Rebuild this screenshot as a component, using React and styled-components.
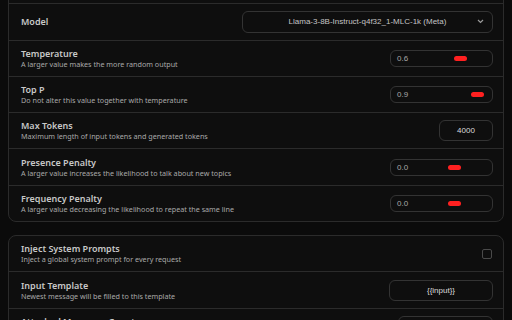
import styled, { createGlobalStyle } from 'styled-components'

const GlobalStyle = createGlobalStyle`
    html, body {
        margin: 0;
        background: #0b0b0b;
        overflow: hidden;
    }
    body {
        font-family: "Noto Sans", "Open Sans", sans-serif;
    }
`

const Page = styled.div`
    display: flex;
    flex-direction: column;
    gap: 13px;
    padding: 0 8px;
    margin-top: -33px;
`

const List = styled.div`
    border: 1px solid #2b2b2b;
    border-radius: 8px;
    background: #0e0e0e;
    overflow: hidden;
`

const Row = styled.div`
    display: flex;
    justify-content: space-between;
    align-items: center;
    height: 35.3px;
    padding: 0 10px 0 12px;
    border-bottom: 1px solid #2b2b2b;

    &:last-child {
        border-bottom: none;
    }
`

const Label = styled.div`
    display: flex;
    flex-direction: column;
`

const Title = styled.div`
    font-size: 9px;
    font-weight: 600;
    line-height: 11px;
    color: #c8c8c8;
`

const Sub = styled.div`
    font-size: 7.2px;
    line-height: 10px;
    color: #a9a9a9;
`

const Select = styled.div`
    position: relative;
    width: 249px;
    height: 20px;
    border: 1px solid #333;
    border-radius: 6px;
    display: flex;
    align-items: center;
    justify-content: center;
    font-family: "Liberation Sans", Arial, sans-serif;
    font-size: 8px;
    color: #c4c4c4;
`

const Chevron = styled.svg`
    position: absolute;
    right: 8px;
    top: 7px;
`

const SliderBox = styled.div`
    position: relative;
    width: 95px;
    height: 15px;
    padding-left: 6px;
    border: 1px solid #333;
    border-radius: 6px;
    display: flex;
    align-items: center;
    font-family: "Liberation Sans", Arial, sans-serif;
    font-size: 8px;
    color: #a8a8a8;
`

const Track = styled.div`
    position: absolute;
    left: 34px;
    right: 9px;
    top: 5px;
    height: 5px;
`

const Thumb = styled.div`
    position: absolute;
    top: 0;
    width: 13px;
    height: 5px;
    margin-left: -6px;
    border-radius: 3px;
    background: #ff2020;
`

const Field = styled.div`
    width: ${p => p.$w}px;
    height: ${p => p.$h}px;
    border: 1px solid #333;
    border-radius: 6px;
    display: flex;
    align-items: center;
    justify-content: center;
    font-family: "Liberation Sans", Arial, sans-serif;
    font-size: 8px;
    color: #dcdcdc;
`

const Check = styled.div`
    width: 8px;
    height: 8px;
    border: 1px solid #4a4a4a;
    border-radius: 2px;
    margin-right: 1px;
`

function Slider({ value, min, max }) {
    const pct = ((value - min) / (max - min)) * 100
    return (
        <SliderBox>
            {value.toFixed(1)}
            <Track>
                <Thumb style={{ left: `${pct}%` }} />
            </Track>
        </SliderBox>
    )
}

function Item({ title, sub, children }) {
    return (
        <Row>
            <Label>
                <Title>{title}</Title>
                {sub && <Sub>{sub}</Sub>}
            </Label>
            {children}
        </Row>
    )
}

function App() {
    return (
        <>
            <GlobalStyle />
            <Page>
                <List>
                    <Item title="" />
                    <Item title="Model">
                        <Select>
                            Llama-3-8B-Instruct-q4f32_1-MLC-1k (Meta)
                            <Chevron width="7" height="5" viewBox="0 0 7 5">
                                <path d="M1 1 L3.5 3.5 L6 1" stroke="#9a9a9a" strokeWidth="1.2" fill="none" />
                            </Chevron>
                        </Select>
                    </Item>
                    <Item title="Temperature" sub="A larger value makes the more random output">
                        <Slider value={0.6} min={0} max={1} />
                    </Item>
                    <Item title="Top P" sub="Do not alter this value together with temperature">
                        <Slider value={0.9} min={0} max={1} />
                    </Item>
                    <Item title="Max Tokens" sub="Maximum length of input tokens and generated tokens">
                        <Field $w={52} $h={19}>4000</Field>
                    </Item>
                    <Item title="Presence Penalty" sub="A larger value increases the likelihood to talk about new topics">
                        <Slider value={0} min={-2} max={2} />
                    </Item>
                    <Item title="Frequency Penalty" sub="A larger value decreasing the likelihood to repeat the same line">
                        <Slider value={0} min={-2} max={2} />
                    </Item>
                </List>
                <List>
                    <Item title="Inject System Prompts" sub="Inject a global system prompt for every request">
                        <Check />
                    </Item>
                    <Item title="Input Template" sub="Newest message will be filled to this template">
                        <Field $w={102} $h={19}>{'{{input}}'}</Field>
                    </Item>
                    <Item title="Attached Messages Count" sub="Number of sent messages attached per request">
                        <Field $w={93} $h={19}>4</Field>
                    </Item>
                </List>
            </Page>
        </>
    )
}

export default App
